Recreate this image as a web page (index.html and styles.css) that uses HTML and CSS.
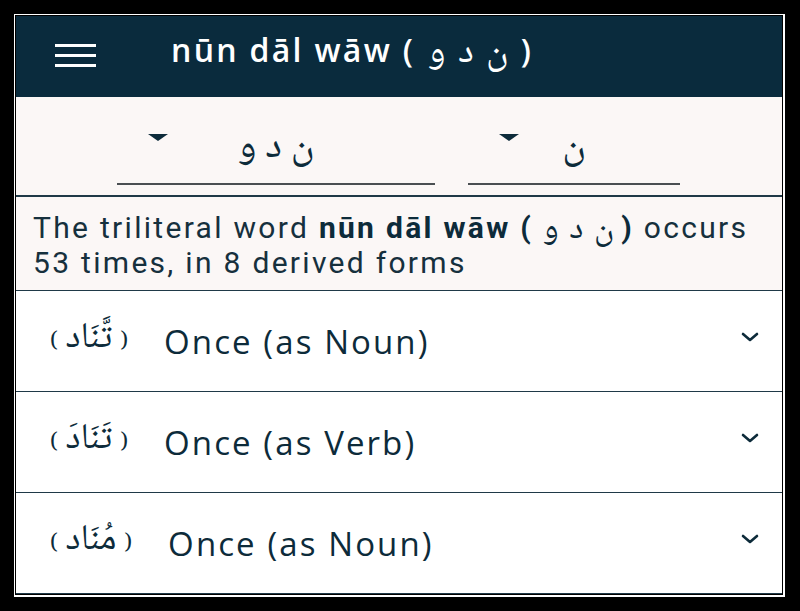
FILE: index.html
```html
<!DOCTYPE html>
<html lang="en">
<head>
    <meta charset="UTF-8">
    <meta name="viewport" content="width=device-width, initial-scale=1.0">
    <title>nūn dāl wāw</title>
    <link rel="stylesheet" href="styles.css">
</head>
<body>
    <div class="frame">
        <div class="app">
            <div class="app-bar">
                <div class="menu-icon">
                    <span></span>
                    <span></span>
                    <span></span>
                </div>
                <h1 class="title">nūn dāl wāw ( <span class="ar" dir="rtl">ن د و</span> )</h1>
            </div>

            <div class="selectors">
                <div class="spinner spinner-wide">
                    <span class="caret"></span>
                    <span class="spinner-value ar" dir="rtl">ن د و</span>
                </div>
                <div class="spinner spinner-narrow">
                    <span class="caret"></span>
                    <span class="spinner-value ar" dir="rtl">ن</span>
                </div>
            </div>

            <div class="summary">
                The triliteral word <b>nūn dāl wāw ( <span class="ar" dir="rtl">ن د و</span> )</b> occurs<br>
                53 times, in 8 derived forms
            </div>

            <div class="forms">
                <div class="form-row">
                    <span class="form-ar" dir="rtl"><i>(</i> تَّنَاد <i>)</i></span>
                    <span class="form-label">Once (as Noun)</span>
                    <svg class="chevron" width="18" height="10" viewBox="0 0 18 10"><path d="M2 2 L9 8 L16 2" fill="none" stroke="#0d2b3a" stroke-width="2.6" stroke-linecap="round" stroke-linejoin="round"/></svg>
                </div>
                <div class="form-row">
                    <span class="form-ar" dir="rtl"><i>(</i> تَنَادَ <i>)</i></span>
                    <span class="form-label">Once (as Verb)</span>
                    <svg class="chevron" width="18" height="10" viewBox="0 0 18 10"><path d="M2 2 L9 8 L16 2" fill="none" stroke="#0d2b3a" stroke-width="2.6" stroke-linecap="round" stroke-linejoin="round"/></svg>
                </div>
                <div class="form-row">
                    <span class="form-ar" dir="rtl"><i>(</i> مُنَاد <i>)</i></span>
                    <span class="form-label">Once (as Noun)</span>
                    <svg class="chevron" width="18" height="10" viewBox="0 0 18 10"><path d="M2 2 L9 8 L16 2" fill="none" stroke="#0d2b3a" stroke-width="2.6" stroke-linecap="round" stroke-linejoin="round"/></svg>
                </div>
            </div>
        </div>
    </div>
</body>
</html>
```

FILE: styles.css
```css
:root {
    --primary: #0a2b3d;
    --surface: #fbf7f6;
    --text: #0d2b3a;
    --divider: #1f3947;
}

* {
    box-sizing: border-box;
}

body {
    margin: 0;
    padding: 14px 15px 14px 14px;
    background: #000;
    font-family: 'Open Sans', sans-serif;
    color: var(--text);
}

.frame {
    border: 1px solid #fff;
    border-right-width: 2px;
    border-bottom-width: 2px;
    padding: 1px;
    background: #000;
}

.app {
    height: 578px;
    overflow: hidden;
    background: #fff;
}

.ar {
    font-family: 'Noto Naskh Arabic', 'Noto Sans Arabic', 'DejaVu Sans', sans-serif;
}

/* app bar */
.app-bar {
    height: 81px;
    background: var(--primary);
    display: flex;
    align-items: center;
    padding-left: 39px;
}

.menu-icon {
    width: 41px;
    display: flex;
    flex-direction: column;
    gap: 7px;
    margin-top: -2px;
}

.menu-icon span {
    display: block;
    height: 3px;
    background: #fff;
}

.title {
    margin: -9px 0 0 75px;
    font-size: 32px;
    line-height: 40px;
    font-weight: 600;
    letter-spacing: 2.3px;
    color: #fff;
    white-space: nowrap;
}

.title .ar {
    font-size: 38px;
    font-weight: 400;
    letter-spacing: 0;
    word-spacing: 4px;
    padding: 0 4px 0 2px;
}

/* spinners */
.selectors {
    height: 100px;
    background: var(--surface);
    border-bottom: 2px solid var(--divider);
    display: flex;
    gap: 33px;
    padding: 0 0 0 101px;
}

.spinner {
    display: grid;
    grid-template-columns: 1fr auto 1fr;
    align-items: center;
    height: 88px;
    border-bottom: 2px solid #4a4f52;
    padding-top: 16px;
}

.spinner-wide {
    width: 318px;
}

.spinner-narrow {
    width: 212px;
}

.caret {
    width: 0;
    height: 0;
    margin-left: 31px;
    margin-top: -22px;
    border-left: 10px solid transparent;
    border-right: 10px solid transparent;
    border-top: 7px solid var(--text);
}

.spinner-value {
    font-size: 40px;
    line-height: 44px;
    word-spacing: 0;
    color: var(--text);
}

/* summary */
.summary {
    height: 94px;
    background: var(--surface);
    border-bottom: 1.5px solid var(--divider);
    padding: 15px 0 0 17px;
    font-family: 'Roboto', sans-serif;
    font-size: 30px;
    line-height: 31px;
    letter-spacing: 2.3px;
    white-space: nowrap;
    color: #16303d;
}

.summary b {
    font-weight: 700;
    color: var(--text);
}

.summary .ar {
    font-size: 34px;
    line-height: 31px;
    font-weight: 400;
    letter-spacing: 0;
    word-spacing: 3px;
}

/* derived forms */
.form-row {
    height: 101px;
    border-bottom: 1.5px solid var(--divider);
    display: flex;
    align-items: center;
    padding: 0 23px 0 34px;
    gap: 36px;
}

.form-ar {
    font-family: 'Noto Naskh Arabic', 'Noto Sans Arabic', 'DejaVu Sans', sans-serif;
    font-size: 36px;
    line-height: 44px;
    color: var(--text);
}

.form-ar i {
    font-style: normal;
    font-size: 22px;
}

.form-label {
    flex: 1;
    font-size: 33px;
    letter-spacing: 2.1px;
    color: var(--text);
}

.chevron {
    margin-top: -8px;
}
```
